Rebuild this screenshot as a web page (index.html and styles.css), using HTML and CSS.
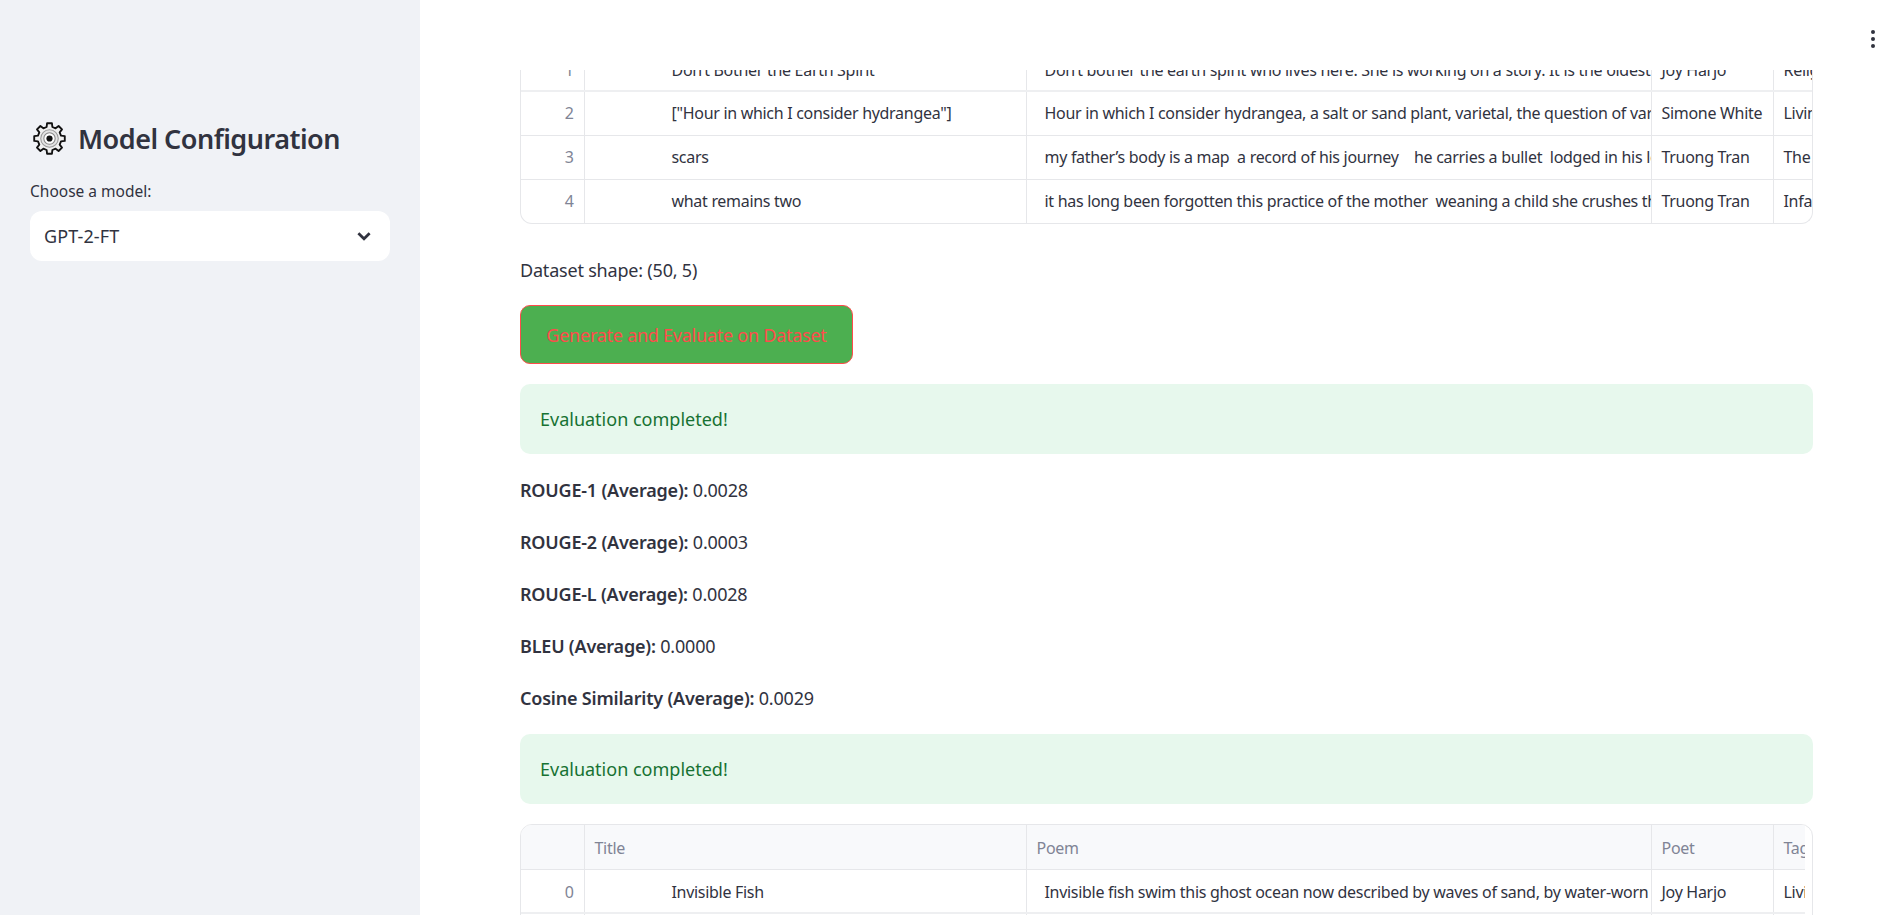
FILE: index.html
```html
<!DOCTYPE html>
<html lang="en">
<head>
  <meta charset="UTF-8">
  <meta name="viewport" content="width=device-width, initial-scale=1.0">
  <title>Model Evaluation</title>
  <link rel="stylesheet" href="styles.css">
</head>
<body>
  <div class="app">
    <aside class="sidebar">
      <div class="side-title">
        <svg class="gear" viewBox="0 0 32 32">
          <polygon fill="#f0f0f0" stroke="#111" stroke-width="1.8" stroke-linejoin="round" points="13.22,4.84 13.65,1.18 18.35,1.18 18.78,4.84 21.92,6.14 24.82,3.86 28.14,7.18 25.86,10.08 27.16,13.22 30.82,13.65 30.82,18.35 27.16,18.78 25.86,21.92 28.14,24.82 24.82,28.14 21.92,25.86 18.78,27.16 18.35,30.82 13.65,30.82 13.22,27.16 10.08,25.86 7.18,28.14 3.86,24.82 6.14,21.92 4.84,18.78 1.18,18.35 1.18,13.65 4.84,13.22 6.14,10.08 3.86,7.18 7.18,3.86 10.08,6.14"/>
          <circle cx="16" cy="16" r="8.5" fill="#e4e4e4" stroke="#9a9a9a" stroke-width="1"/>
          <circle cx="16" cy="16" r="5.5" fill="#fff" stroke="#888" stroke-width="1"/>
          <circle cx="16" cy="16" r="3" fill="#111"/>
        </svg>
        <h2>Model Configuration</h2>
      </div>
      <label class="side-label">Choose a model:</label>
      <div class="select-box">
        <span>GPT-2-FT</span>
        <svg class="chevron" viewBox="0 0 16 16"><path d="M3 5.5 8 10.5 13 5.5" fill="none" stroke="#31333f" stroke-width="2.4"/></svg>
      </div>
    </aside>

    <main class="main">
      <div class="kebab"><i></i><i></i><i></i></div>

      <div class="table-top">
        <table class="data">
          <tr class="thick">
            <td class="idx">1</td>
            <td class="title">Don’t Bother the Earth Spirit</td>
            <td class="poem">Don’t bother the earth spirit who lives here. She is working on a story. It is the oldest story in the world and it is delicate</td>
            <td>Joy Harjo</td>
            <td>Religion</td>
          </tr>
          <tr>
            <td class="idx">2</td>
            <td class="title">["Hour in which I consider hydrangea"]</td>
            <td class="poem">Hour in which I consider hydrangea, a salt or sand plant, varietal, the question of varieties and of what is</td>
            <td>Simone White</td>
            <td>Living</td>
          </tr>
          <tr>
            <td class="idx">3</td>
            <td class="title">scars</td>
            <td class="poem">my father’s body is a map  a record of his journey    he carries a bullet  lodged in his left leg from the war</td>
            <td>Truong Tran</td>
            <td>The Body</td>
          </tr>
          <tr>
            <td class="idx">4</td>
            <td class="title">what remains two</td>
            <td class="poem">it has long been forgotten this practice of the mother  weaning a child she crushes the seeds and leaves</td>
            <td>Truong Tran</td>
            <td>Infancy</td>
          </tr>
        </table>
      </div>

      <p class="shape">Dataset shape: (50, 5)</p>

      <button class="run-btn">Generate and Evaluate on Dataset</button>

      <div class="alert">Evaluation completed!</div>

      <div class="metrics">
        <p><b>ROUGE-1 (Average):</b> 0.0028</p>
        <p><b>ROUGE-2 (Average):</b> 0.0003</p>
        <p><b>ROUGE-L (Average):</b> 0.0028</p>
        <p><b>BLEU (Average):</b> 0.0000</p>
        <p><b>Cosine Similarity (Average):</b> 0.0029</p>
      </div>

      <div class="alert second">Evaluation completed!</div>

      <div class="table-bottom">
        <div class="table-view">
          <table class="data">
            <tr class="head">
              <th></th>
              <th>Title</th>
              <th>Poem</th>
              <th>Poet</th>
              <th>Tags</th>
            </tr>
            <tr class="thick">
              <td class="idx">0</td>
              <td class="title">Invisible Fish</td>
              <td class="poem">Invisible fish swim this ghost ocean now described by waves of sand, by water-worn rock. Soon the fish will learn</td>
              <td>Joy Harjo</td>
              <td>Living</td>
            </tr>
            <tr>
              <td class="idx">1</td>
              <td class="title">Don’t Bother the Earth Spirit</td>
              <td class="poem">Don’t bother the earth spirit who lives here.</td>
              <td>Joy Harjo</td>
              <td>Religion</td>
            </tr>
          </table>
        </div>
      </div>
    </main>
  </div>
</body>
</html>
```

FILE: styles.css
```css
* {
  box-sizing: border-box;
}
html, body {
  height: 100%;
  margin: 0;
  overflow: hidden;
}
body {
  font-family: "Noto Sans", Arial, sans-serif;
  color: #31333f;
  background: white;
}
.app {
  display: flex;
  height: 915px;
}

/* sidebar */
.sidebar {
  width: 420px;
  flex: none;
  background: #f0f2f6;
  padding: 122px 30px 0;
}
.side-title {
  display: flex;
  align-items: center;
  gap: 12px;
  padding-left: 3px;
}
.gear {
  width: 33px;
  height: 33px;
  flex: none;
}
.side-title h2 {
  margin: 0;
  font-size: 27px;
  line-height: 33px;
  font-weight: 600;
  letter-spacing: -0.5px;
}
.side-label {
  display: block;
  margin-top: 25px;
  font-size: 15.5px;
  line-height: 22px;
}
.select-box {
  display: flex;
  align-items: center;
  justify-content: space-between;
  height: 50px;
  margin-top: 9px;
  padding: 0 17px 0 14px;
  background: white;
  border-radius: 12px;
  font-size: 18px;
  letter-spacing: 0.1px;
}
.chevron {
  width: 18px;
  height: 18px;
}

/* main column */
.main {
  flex: 1;
  position: relative;
  padding: 70px 73px 0 100px;
  overflow: hidden;
}
.kebab {
  position: absolute;
  top: 30px;
  right: 11px;
  display: flex;
  flex-direction: column;
  gap: 3px;
}
.kebab i {
  width: 4px;
  height: 4px;
  border-radius: 50%;
  background: #31333f;
}

/* tables */
.table-top {
  display: flex;
  flex-direction: column;
  justify-content: flex-end;
  height: 154px;
  overflow: hidden;
  border: 1px solid #e6e7ea;
  border-top: none;
  border-radius: 0 0 12px 12px;
}
.table-bottom {
  height: 120px;
  margin-top: 20px;
  border: 1px solid #e6e7ea;
  border-radius: 12px 12px 0 0;
  overflow: hidden;
  padding-right: 7px;
}
.table-view {
  overflow: hidden;
}
.data {
  table-layout: fixed;
  border-collapse: collapse;
  width: 1292px;
  flex: none;
  font-size: 16px;
  letter-spacing: -0.3px;
}
.data td, .data th {
  height: 44px;
  padding: 0 10px;
  border-right: 1px solid #e6e7ea;
  border-bottom: 1px solid #e6e7ea;
  overflow: hidden;
  white-space: pre;
  text-align: left;
  font-weight: 400;
}
.data tr > :nth-child(1) { width: 63px; }
.data tr > :nth-child(2) { width: 442px; }
.data tr > :nth-child(3) { width: 625px; }
.data tr > :nth-child(4) { width: 122px; }
.data tr > :nth-child(5) { width: 40px; border-right: none; }
.data tr:last-child td {
  border-bottom: none;
}
.data .thick td {
  padding-top: 2px;
  border-bottom-width: 2px;
  border-bottom-color: #eeeff1;
}
.data .head th {
  height: 44px;
  padding-top: 2px;
  background: #f8f9fb;
  color: #808495;
}
.data .idx {
  text-align: right;
  color: #808495;
}
.data .title {
  padding-left: 87px;
}
.data .poem {
  padding-left: 18px;
  padding-right: 0;
}

/* body text */
.shape {
  margin: 27px 0 0;
  font-size: 18px;
  line-height: 38px;
  letter-spacing: -0.2px;
}
.run-btn {
  display: block;
  width: 333px;
  height: 59px;
  margin-top: 16px;
  background: #4caf50;
  border: 1px solid #ff4b4b;
  border-radius: 10px;
  color: #ff4b4b;
  font-family: inherit;
  font-size: 18px;
  letter-spacing: -0.25px;
}
.alert {
  height: 70px;
  margin-top: 20px;
  padding: 0 20px;
  display: flex;
  align-items: center;
  background: #e7f8ed;
  border-radius: 10px;
  color: #177233;
  font-size: 18px;
}
.metrics {
  margin-top: 10px;
}
.metrics p {
  margin: 0;
  height: 52px;
  line-height: 52px;
  font-size: 18px;
  letter-spacing: -0.2px;
}
.metrics b {
  font-weight: 600;
}
.alert.second {
  margin-top: 10px;
}
```
